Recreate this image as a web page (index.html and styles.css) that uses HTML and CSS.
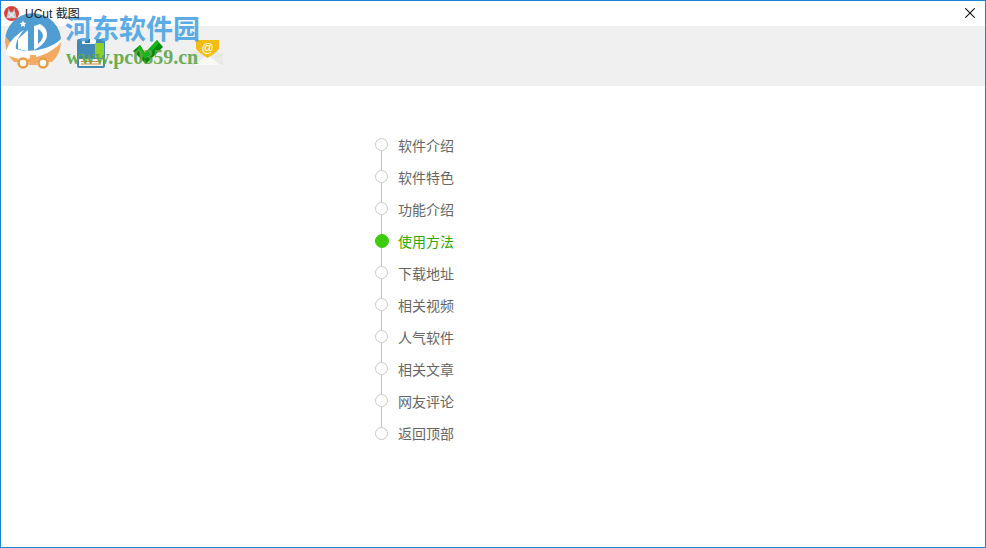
FILE: index.html
```html
<!DOCTYPE html>
<html lang="zh">
<head>
<meta charset="utf-8">
<title>UCut 截图</title>
<link rel="stylesheet" href="styles.css">
</head>
<body>
<div class="window">
  <header class="titlebar">
    <svg class="app-icon" viewBox="0 0 16 16" width="15" height="15">
      <circle cx="8" cy="8" r="8" fill="#d8433f"/>
      <path d="M5 2.500 6.500 6h3L11 2.500 12 7l1.500 6h-11L4 7z" fill="#c6c6d0"/>
      <path d="M5 7l6 5M11 7l-6 5" stroke="#f4f4f6" stroke-width="1.200"/>
    </svg>
    <span class="app-title">UCut 截图</span>
    <svg class="close" viewBox="0 0 10 10" width="10" height="10">
      <path d="M.3.3l9.400 9.400M9.700.3L.3 9.700" stroke="#111" stroke-width="1.100" fill="none"/>
    </svg>
  </header>
  <div class="toolbar">
    <svg class="tool tool-save" viewBox="0 0 30 30" width="30" height="30">
      <rect x="1" y="1" width="28" height="29" rx="2" fill="#4289b8"/>
      <rect x="6" y="1" width="14" height="5" fill="#f4f6f8"/>
      <rect x="9" y="1" width="5" height="4" fill="#2f79b0"/>
      <rect x="3" y="21" width="24" height="7" fill="#f8f4e8"/>
      <path d="M5 23.500h20M5 26h20" stroke="#d98a3a" stroke-width="1"/>
      <rect x="19" y="5" width="9" height="15" fill="#8ed02a"/>
    </svg>
    <svg class="tool tool-check" viewBox="0 0 30 24" width="30" height="24">
      <path d="M0 11 7 5l5 8L24 0l6 7-17 17z" fill="#078a07"/>
      <path d="M7 5l5 8L24 0l2 3L12 19 4 9z" fill="#14b814"/>
    </svg>
    <svg class="tool tool-mail" viewBox="0 0 31 26" width="31" height="26">
      <path d="M0 14 15 6l16 8v11H0z" fill="#e9e9e5"/>
      <path d="M2 25 14 16h3l12 9z" fill="#f8f8f5"/>
      <path d="M4 0h23v9l-4 4-7.500 5L8 13l-4-4z" fill="#f2bd12"/>
      <text class="mail-at" x="15.500" y="12">@</text>
    </svg>
  </div>
  <main class="content">
    <ul class="timeline">
      <li class="step"><span class="dot"></span><span class="label">软件介绍</span></li>
      <li class="step"><span class="dot"></span><span class="label">软件特色</span></li>
      <li class="step"><span class="dot"></span><span class="label">功能介绍</span></li>
      <li class="step active"><span class="dot"></span><span class="label">使用方法</span></li>
      <li class="step"><span class="dot"></span><span class="label">下载地址</span></li>
      <li class="step"><span class="dot"></span><span class="label">相关视频</span></li>
      <li class="step"><span class="dot"></span><span class="label">人气软件</span></li>
      <li class="step"><span class="dot"></span><span class="label">相关文章</span></li>
      <li class="step"><span class="dot"></span><span class="label">网友评论</span></li>
      <li class="step"><span class="dot"></span><span class="label">返回顶部</span></li>
    </ul>
  </main>
  <div class="watermark">
    <svg class="wm-logo" viewBox="0 0 58 58" width="58" height="58">
      <path d="M10 50A28 28 0 1 1 48 50z" fill="#f3ab63"/>
      <path d="M1.500 24A28 28 0 0 1 57 29.400C50 37 30 42 12 38z" fill="#4f9dd2"/>
      <path d="M2 42C3 32 10 24 20 18 14 25 11 32 12 37 28 42 48 36 57 27V30C48 42 20 54 2 42z" fill="#fff"/>
      <path d="M14 37V27L24 18V39z" fill="#fff"/>
      <path d="M30 38V14l6-2C47 18 45 31 30 38z" fill="#fff"/>
      <path d="M34 32V17C41 21 40 27 34 32z" fill="#4f9dd2"/>
      <path d="M19 8.500l1 2.200 2.300.3-1.700 1.600.5 2.300-2.100-1.100-2.100 1.100.5-2.300-1.700-1.600 2.300-.3z" fill="#fff"/>
      <path d="M14 47h10v3H14zM34 47h10v3H34z" fill="#fff"/>
      <circle cx="19" cy="51" r="4.500" fill="#fff" stroke="#e99c3f" stroke-width="2.500"/>
      <circle cx="39" cy="51" r="4.500" fill="#fff" stroke="#e99c3f" stroke-width="2.500"/>
      <path d="M26 43h6l1 10h-8z" fill="#f3ab63"/>
    </svg>
    <span class="wm-name">河东软件园</span>
    <span class="wm-url">www.pc0359.cn</span>
  </div>
</div>
</body>
</html>
```
FILE: styles.css
```css
* { box-sizing: border-box; }
html, body { margin: 0; height: 100%; }
body { background: #fff; overflow: hidden; }
.window {
  position: relative;
  width: 986px;
  height: 548px;
  border: 1px solid #1883d7;
  display: flex;
  flex-direction: column;
  background: #fff;
}
.titlebar {
  position: relative;
  z-index: 1;
  flex: 0 0 25px;
  display: flex;
  align-items: center;
  padding: 0 10px 1px 3px;
  gap: 6px;
}
.app-icon { flex: none; }
.app-title {
  font: 12px/16px "Liberation Sans", "Noto Sans CJK SC", sans-serif;
  color: #222;
  padding-top: 1px;
}
.close { margin-left: auto; }
.toolbar {
  flex: 0 0 60px;
  background: #f0f0f0;
  display: flex;
  align-items: flex-start;
  padding: 12px 0 0 75px;
}
.tool { flex: none; }
.tool-check { margin-left: 27px; margin-top: 2px; }
.tool-mail { margin-left: 29px; margin-top: 2px; }
.mail-at {
  font: 12px "Liberation Sans", sans-serif;
  fill: #fff;
  text-anchor: middle;
}
.content { flex: 1; padding: 42px 0 0 374px; }
.timeline { list-style: none; margin: 0; padding: 0; width: 120px; }
.step {
  position: relative;
  height: 32px;
  display: flex;
  align-items: center;
  gap: 10px;
}
.step:not(:last-child)::after {
  content: "";
  position: absolute;
  left: 6px;
  top: 16px;
  width: 1px;
  height: 32px;
  background: #c4c4c4;
}
.step:last-child .dot { margin-top: 2px; }
.dot {
  position: relative;
  z-index: 1;
  flex: none;
  width: 13px;
  height: 13px;
  border-radius: 50%;
  border: 1px solid #c8c8c8;
  background: #fff;
}
.label {
  font: 14px/20px "Noto Sans CJK SC", "Liberation Sans", sans-serif;
  color: #666;
  padding-top: 2px;
}
.active .dot {
  width: 14px;
  height: 14px;
  margin: 2px -1px 0 0;
  background: #3ccc0c;
  border-color: #3ccc0c;
}
.active .label { color: #2fa800; }
.watermark {
  position: absolute;
  left: 0;
  top: 0;
  width: 240px;
  height: 80px;
  pointer-events: none;
}
.wm-logo { position: absolute; left: 3px; top: 11px; }
.wm-name {
  position: absolute;
  left: 64px;
  top: 10px;
  font: bold 27px/38px "Liberation Serif", "Noto Sans CJK SC", serif;
  color: #4fa6e6;
  white-space: nowrap;
  opacity: .92;
}
.wm-url {
  position: absolute;
  left: 65px;
  top: 46px;
  font: bold 20px/20px "Liberation Serif", serif;
  color: #5fa84a;
  white-space: nowrap;
  opacity: .92;
}
```
